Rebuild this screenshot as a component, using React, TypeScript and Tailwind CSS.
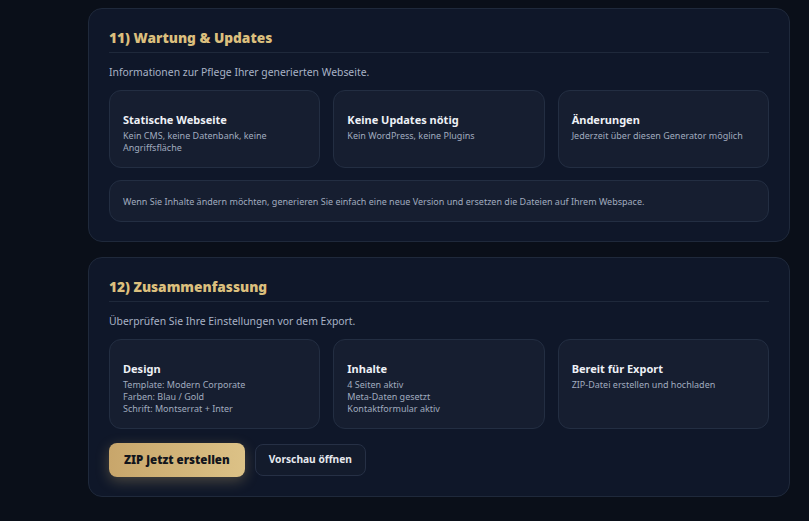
import React from 'react';

type Info = { title: string; lines: string[] };

const wartung: Info[] = [
  { title: 'Statische Webseite', lines: ['Kein CMS, keine Datenbank, keine Angriffsfläche'] },
  { title: 'Keine Updates nötig', lines: ['Kein WordPress, keine Plugins'] },
  { title: 'Änderungen', lines: ['Jederzeit über diesen Generator möglich'] },
];

const summary: Info[] = [
  {
    title: 'Design',
    lines: ['Template: Modern Corporate', 'Farben: Blau / Gold', 'Schrift: Montserrat + Inter'],
  },
  { title: 'Inhalte', lines: ['4 Seiten aktiv', 'Meta-Daten gesetzt', 'Kontaktformular aktiv'] },
  { title: 'Bereit für Export', lines: ['ZIP-Datei erstellen und hochladen'] },
];

const InfoCard = ({ item }: { item: Info }) => (
  <div className="rounded-[12px] border border-[#232e42] bg-[#161e30] px-[13px] pt-[22px] pb-[13px]">
    <h3 className="text-[11px] font-bold leading-[14px] text-[#eef1f6]">{item.title}</h3>
    <div className="mt-[3px] text-[9px] leading-[12px] text-[#a0abbf]">
      {item.lines.map((l) => (
        <p key={l}>{l}</p>
      ))}
    </div>
  </div>
);

const Section = ({
  title,
  intro,
  children,
}: {
  title: string;
  intro: string;
  children: React.ReactNode;
}) => (
  <section className="rounded-[14px] border border-[#1f293b] bg-[#0f1729] px-[20px] pt-[19px] pb-[19px]">
    <h2 className="border-b border-[#1f293b] pb-[4px] text-[13.7px] font-black leading-[20px] text-[#dbbf7d]">
      {title}
    </h2>
    <p className="mt-[12px] text-[10.4px] leading-[14px] text-[#a9b3c6]">{intro}</p>
    {children}
  </section>
);

export default function App() {
  return (
    <div
      className="min-h-screen bg-[#0a0f19] pl-[88px] pt-[8px] pb-[26px]"
      style={{ fontFamily: '"Noto Sans", "Open Sans", sans-serif' }}
    >
      <div className="flex w-[702px] flex-col gap-[15px]">
        {/* 11) Wartung */}
        <Section title="11) Wartung & Updates" intro="Informationen zur Pflege Ihrer generierten Webseite.">
          <div className="mt-[11px] grid grid-cols-3 gap-[13px]">
            {wartung.map((w) => (
              <InfoCard key={w.title} item={w} />
            ))}
          </div>
          <div className="mt-[12px] rounded-[12px] border border-[#232e42] bg-[#161e30] px-[13px] pt-[15px] pb-[13px] text-[9px] leading-[12px] text-[#a0abbf]">
            Wenn Sie Inhalte ändern möchten, generieren Sie einfach eine neue Version und ersetzen die Dateien auf Ihrem Webspace.
          </div>
        </Section>

        {/* 12) Zusammenfassung */}
        <Section title="12) Zusammenfassung" intro="Überprüfen Sie Ihre Einstellungen vor dem Export.">
          <div className="mt-[11px] grid grid-cols-3 gap-[13px]">
            {summary.map((s) => (
              <InfoCard key={s.title} item={s} />
            ))}
          </div>
          <div className="mt-[14px] flex items-center gap-[10px]">
            <button className="h-[34px] rounded-[8px] bg-gradient-to-r from-[#c8a66b] to-[#dcc287] px-[15px] text-[11.5px] font-black text-[#12151c] shadow-[0_4px_14px_rgba(214,184,120,0.3)]">
              ZIP jetzt erstellen
            </button>
            <button className="h-[32px] rounded-[8px] border border-[#263045] bg-[#131b2c] px-[13px] text-[10.2px] font-bold text-[#e6e9ef]">
              Vorschau öffnen
            </button>
          </div>
        </Section>
      </div>
    </div>
  );
}
